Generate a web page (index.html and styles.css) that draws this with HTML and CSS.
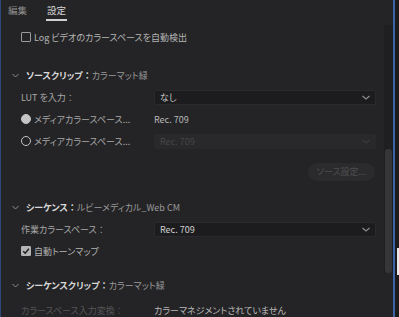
FILE: index.html
```html
<!DOCTYPE html>
<html lang="ja">
<head>
    <meta charset="UTF-8">
    <meta name="viewport" content="width=device-width, initial-scale=1.0">
    <title>Lumetri - 設定</title>
    <link rel="stylesheet" href="styles.css">
</head>
<body>
    <div class="window">
        <div class="panel">
            <div class="tabs">
                <span class="tab">編集</span>
                <span class="tab active">設定</span>
            </div>

            <div class="row check-row top-check">
                <span class="checkbox"></span>
                <span class="label">Log ビデオのカラースペースを自動検出</span>
            </div>

            <!-- Source clip -->
            <div class="section-head first">
                <svg class="chev" width="7" height="5" viewBox="0 0 7 5"><path d="M0.5 1 L3.5 4 L6.5 1" fill="none" stroke="#8c8c8c" stroke-width="1"/></svg>
                <b>ソースクリップ<span class="colon">：</span></b><span class="sub">カラーマット緑</span>
            </div>
            <div class="row field">
                <span class="name">LUT を入力<span class="colon">：</span></span>
                <div class="select">
                    <span>なし</span>
                    <svg class="chev" width="8" height="5" viewBox="0 0 8 5"><path d="M0.5 1 L4 4 L7.5 1" fill="none" stroke="#8c8c8c" stroke-width="1.2"/></svg>
                </div>
            </div>
            <div class="row field">
                <span class="name radio-name"><span class="radio on"></span>メディアカラースペース...</span>
                <span class="value">Rec. 709</span>
            </div>
            <div class="row field">
                <span class="name radio-name"><span class="radio"></span>メディアカラースペース...</span>
                <div class="select disabled">
                    <span>Rec. 709</span>
                    <svg class="chev" width="8" height="5" viewBox="0 0 8 5"><path d="M0.5 1 L4 4 L7.5 1" fill="none" stroke="#3c3c3e" stroke-width="1.2"/></svg>
                </div>
            </div>
            <div class="button-row">
                <span class="button">ソース設定...</span>
            </div>

            <!-- Sequence -->
            <div class="section-head after-button">
                <svg class="chev" width="7" height="5" viewBox="0 0 7 5"><path d="M0.5 1 L3.5 4 L6.5 1" fill="none" stroke="#8c8c8c" stroke-width="1"/></svg>
                <b>シーケンス<span class="colon">：</span></b><span class="sub">ルビーメディカル_Web CM</span>
            </div>
            <div class="row field">
                <span class="name">作業カラースペース<span class="colon">：</span></span>
                <div class="select bright">
                    <span>Rec. 709</span>
                    <svg class="chev" width="8" height="5" viewBox="0 0 8 5"><path d="M0.5 1 L4 4 L7.5 1" fill="none" stroke="#8c8c8c" stroke-width="1.2"/></svg>
                </div>
            </div>
            <div class="row check-row">
                <span class="checkbox checked">
                    <svg width="8" height="8" viewBox="0 0 8 8"><path d="M1.2 4.2 L3.2 6.2 L6.9 1.8" fill="none" stroke="#1e1e20" stroke-width="1.5"/></svg>
                </span>
                <span class="label">自動トーンマップ</span>
            </div>

            <!-- Sequence clip -->
            <div class="section-head">
                <svg class="chev" width="7" height="5" viewBox="0 0 7 5"><path d="M0.5 1 L3.5 4 L6.5 1" fill="none" stroke="#8c8c8c" stroke-width="1"/></svg>
                <b>シーケンスクリップ<span class="colon">：</span></b><span class="sub">カラーマット緑</span>
            </div>
            <div class="row field last">
                <span class="name dim">カラースペース入力変換<span class="colon">：</span></span>
                <span class="value">カラーマネジメントされていません</span>
            </div>
        </div>

        <div class="scroll">
            <div class="thumb"></div>
        </div>
        <div class="edge">
            <div class="edge-mark"></div>
        </div>
    </div>
</body>
</html>
```

FILE: styles.css
```css
body {
    margin: 0;
    background-color: #1c1c1d;
    font-family: "Noto Sans CJK JP", "Noto Sans", sans-serif;
    font-size: 9px;
    font-feature-settings: "palt";
    color: #b2b2b2;
    overflow: hidden;
}

.colon {
    font-feature-settings: normal;
}

.window {
    display: flex;
    height: 317px;
    width: 399px;
    border-left: 1px solid #2b4a78;
    box-sizing: border-box;
    background-color: #242426;
}

.panel {
    flex: 1;
    padding-left: 7px;
    overflow: hidden;
}

.tabs {
    display: flex;
    gap: 19px;
    height: 22px;
    align-items: flex-start;
}

.tab {
    line-height: 20px;
    font-size: 9.5px;
    color: #8e8e8e;
}

.tab.active {
    color: #d6d6d6;
    border-bottom: 2px solid #d0d0d0;
    height: 19px;
    padding: 0 1px;
}

.row {
    display: flex;
    align-items: center;
    height: 22px;
    padding-left: 13px;
}

.top-check {
    margin-top: 4px;
}

.checkbox {
    width: 8px;
    height: 8px;
    border: 1.5px solid #9a9a9a;
    border-radius: 1px;
    margin-right: 3px;
    display: flex;
    align-items: center;
    justify-content: center;
}

.checkbox.checked {
    background-color: #b4b4b4;
    border-color: #b4b4b4;
}

.label {
    color: #b4b4b4;
}

.section-head {
    display: flex;
    align-items: center;
    height: 22px;
    padding-left: 4px;
    margin-top: 12px;
    color: #9a9a9a;
}

.section-head.first {
    margin-top: 16px;
}

.section-head.after-button {
    margin-top: 15px;
}

.section-head .chev {
    margin-right: 7px;
}

.section-head b {
    color: #d8d8d8;
    font-weight: bold;
}

.field {
    height: 22px;
}

.field.last {
    margin-top: 3px;
}

.name {
    width: 133px;
    flex-shrink: 0;
    color: #a8a8a8;
}

.name.dim {
    color: #555557;
}

.radio-name {
    display: flex;
    align-items: center;
}

.radio {
    width: 8px;
    height: 8px;
    border: 1.5px solid #c4c4c4;
    border-radius: 50%;
    margin-right: 3px;
}

.radio.on {
    background-color: #c4c4c4;
}

.value {
    color: #b8b8b8;
}

.select {
    width: 222px;
    height: 15px;
    background-color: #1c1c1e;
    border: 1px solid #2a2a2c;
    border-radius: 1px;
    display: flex;
    align-items: center;
    justify-content: space-between;
    padding: 0 5px 0 5px;
    box-sizing: border-box;
    color: #c8c8c8;
}

.select.disabled {
    background-color: #29292b;
    border-color: #29292b;
    color: #454547;
}

.select.bright {
    color: #d0d0d0;
}

.button-row {
    display: flex;
    justify-content: flex-end;
    padding-right: 9px;
    margin-top: 11px;
}

.button {
    height: 18px;
    line-height: 18px;
    padding: 0 9px;
    border-radius: 9px;
    background-color: #2b2b2d;
    color: #4e4e50;
}

.scroll {
    width: 9px;
    margin-top: 25px;
    height: 248px;
    background-color: #1f1f21;
    display: flex;
    flex-direction: column;
    justify-content: flex-end;
    align-items: center;
}

.thumb {
    width: 7px;
    height: 124px;
    border-radius: 3px;
    background-color: #363638;
}

.edge {
    width: 4px;
    border-left: 2px solid #3a64a4;
    background-color: #1b1b1c;
    padding-top: 248px;
}

.edge-mark {
    width: 2px;
    height: 27px;
    margin-left: 2px;
    background-color: #e8e8e8;
}
```
